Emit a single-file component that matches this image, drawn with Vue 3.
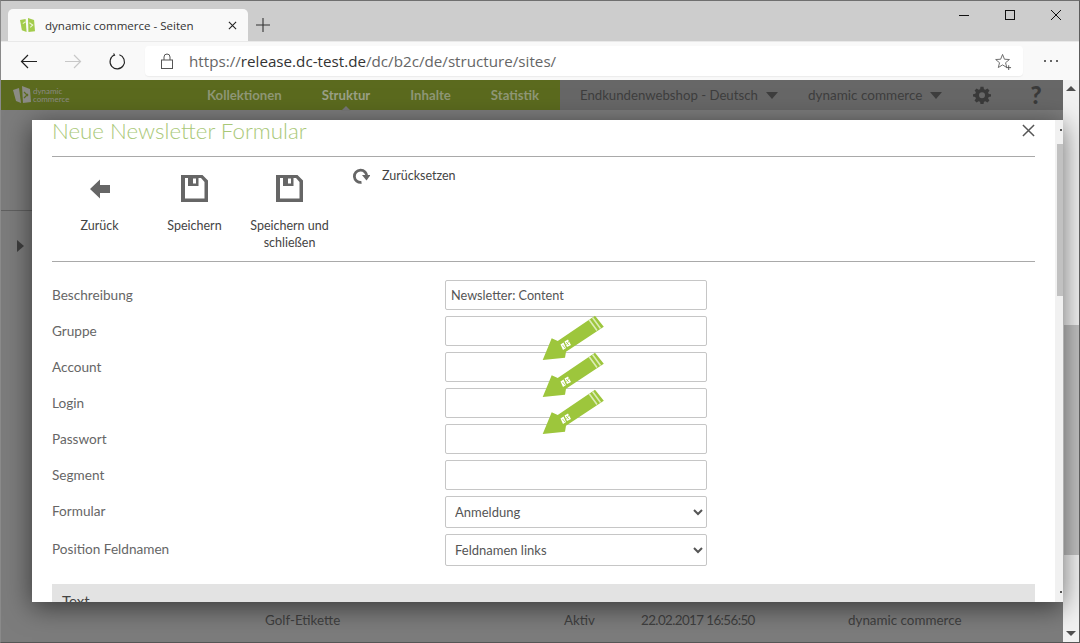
<script setup>
const labels = ['Beschreibung', 'Gruppe', 'Account', 'Login', 'Passwort', 'Segment']
const arrows = [0, 37, 74]
</script>

<template>
  <div class="window">
    <div class="titlebar">
      <div class="tab">
        <svg class="favicon" viewBox="0 0 16 16">
          <path d="M0 2 L6 1 L7 15 L2 13 Z" fill="#a3cc4c" />
          <path d="M8.5 0 L15 2 L16 14 L9 15 Z" fill="#a3cc4c" />
          <path d="M3 6 L6 4 M10 5 L14 8 M11 10 L14 7" stroke="#e8f3cf" stroke-width="1.2" fill="none" />
        </svg>
        <span class="tab-title">dynamic commerce - Seiten</span>
        <svg class="tab-close" viewBox="0 0 10 10"><path d="M1 1 L9 9 M9 1 L1 9" stroke="#222" stroke-width="1.2" /></svg>
      </div>
      <svg class="new-tab" viewBox="0 0 14 14"><path d="M7 0 V14 M0 7 H14" stroke="#333" stroke-width="1.1" /></svg>
      <div class="win-buttons">
        <svg viewBox="0 0 12 12"><path d="M1 6.5 H11" stroke="#111" stroke-width="1" /></svg>
        <svg viewBox="0 0 12 12"><rect x="1.5" y="1.5" width="9" height="9" fill="none" stroke="#111" stroke-width="1" /></svg>
        <svg viewBox="0 0 12 12"><path d="M1 1 L11 11 M11 1 L1 11" stroke="#111" stroke-width="1" /></svg>
      </div>
    </div>

    <div class="toolbar">
      <div class="nav-icons">
        <svg viewBox="0 0 18 16"><path d="M17 8 H1.5 M8 1.5 L1.5 8 L8 14.5" fill="none" stroke="#222" stroke-width="1.2" /></svg>
        <svg viewBox="0 0 18 16"><path d="M1 8 H16.5 M10 1.5 L16.5 8 L10 14.5" fill="none" stroke="#c8c8c8" stroke-width="1.2" /></svg>
        <svg viewBox="0 0 18 18"><path d="M6.2 2.2 A7.6 7.6 0 1 0 11.5 1.9 M5.4 0.6 L6.4 2.4 L3.6 3.4" fill="none" stroke="#222" stroke-width="1.2" /></svg>
      </div>
      <div class="address">
        <svg class="lock" viewBox="0 0 12 16"><path d="M3 7 V4 A3 3 0 0 1 9 4 V7" fill="none" stroke="#555" stroke-width="1" /><rect x="0.5" y="7" width="11" height="8.5" fill="none" stroke="#555" stroke-width="1" /></svg>
        <span class="url"><span class="url-dim">https://</span>release.dc-test.de<span class="url-dim">/dc/b2c/de/structure/sites/</span></span>
        <svg class="star" viewBox="0 0 18 18"><path d="M8 1.5 L10 6.6 L15.3 6.9 L11.2 10.3 L12.5 15.4 L8 12.6 L3.5 15.4 L4.8 10.3 L0.7 6.9 L6 6.6 Z" fill="none" stroke="#666" stroke-width="1" /><path d="M14.5 13 V18 M12 15.5 H17" stroke="#555" stroke-width="1" /></svg>
      </div>
      <div class="more"><i></i><i></i><i></i></div>
    </div>

    <div class="viewport">
      <div class="page">
        <div class="app-header">
          <div class="logo">
            <svg viewBox="0 0 18 18"><path d="M0 4 L6 2 L8 17 L3 15 Z" fill="#8b8b85" /><path d="M9 0 L17 3 L18 16 L10 17 Z" fill="#8b8b85" /><path d="M11 6 L15 10 M11 12 L15 8" stroke="#5c6a20" stroke-width="1.2" /></svg>
            <span>dynamic<br />commerce</span>
          </div>
          <nav class="main-nav">
            <a>Kollektionen</a>
            <a class="active">Struktur</a>
            <a>Inhalte</a>
            <a>Statistik</a>
          </nav>
          <div class="header-right">
            <span class="drop shop">Endkundenwebshop - Deutsch<b></b></span>
            <span class="drop">dynamic commerce<b></b></span>
            <svg class="gear" viewBox="0 0 24 24"><path fill="#3a3a3a" fill-rule="evenodd" d="M10 1 H14 L14.6 4.2 L16.6 5 L19.3 3.2 L22 6 L20.1 8.6 L21 10.6 L24 11 V14 L20.9 14.6 L20.1 16.6 L21.9 19.3 L19.2 22 L16.6 20.2 L14.6 21 L14 24 H10 L9.4 21 L7.4 20.2 L4.8 22 L2 19.3 L3.9 16.6 L3.1 14.6 L0 14 V11 L3.1 10.4 L3.9 8.4 L2.1 5.9 L4.8 3.2 L7.4 5 L9.4 4.2 Z M12 8.4 A4 4 0 1 0 12 16.4 A4 4 0 1 0 12 8.4 Z" /></svg>
            <span class="help">?</span>
          </div>
        </div>
        <div class="sub-section"></div>
        <div class="tree-toggle"></div>
        <div class="bg-row">
          <span>Golf-Etikette</span>
          <span>Aktiv</span>
          <span class="bg-date">22.02.2017 16:56:50</span>
          <span>dynamic commerce</span>
        </div>

        <div class="modal">
          <div class="modal-content">
            <div class="modal-title">Neue Newsletter Formular</div>
            <svg class="modal-close" viewBox="0 0 14 14"><path d="M1 1 L13 13 M13 1 L1 13" stroke="#555" stroke-width="1.6" /></svg>
            <div class="actions">
              <div class="action">
                <svg class="a-icon back" viewBox="0 0 20 20"><path d="M0 10 L10 0.5 V6 H20 V14 H10 V19.5 Z" fill="#666" /></svg>
                <span>Zurück</span>
              </div>
              <div class="action">
                <svg class="a-icon" viewBox="0 0 27 27"><path fill="#666" fill-rule="evenodd" d="M0 0 H21.5 L27 5.5 V27 H0 Z M4 3 V23.5 H23.5 V7 L20 3 H17.5 V11 H7 V3 Z M12 3.5 V8.5 H15 V3.5 Z" /></svg>
                <span>Speichern</span>
              </div>
              <div class="action">
                <svg class="a-icon" viewBox="0 0 27 27"><path fill="#666" fill-rule="evenodd" d="M0 0 H21.5 L27 5.5 V27 H0 Z M4 3 V23.5 H23.5 V7 L20 3 H17.5 V11 H7 V3 Z M12 3.5 V8.5 H15 V3.5 Z" /></svg>
                <span>Speichern und schließen</span>
              </div>
              <div class="reset">
                <svg viewBox="0 0 18 16"><path d="M14.8 8.5 A6.2 6.2 0 1 0 9.5 14.4" fill="none" stroke="#666" stroke-width="2.8" /><path d="M10 7 H18.5 L14.5 12.5 Z" fill="#666" /></svg>
                <span>Zurücksetzen</span>
              </div>
            </div>

            <form class="form">
              <div v-for="(label, i) in labels" :key="label" class="row">
                <label>{{ label }}</label>
                <input type="text" :value="i === 0 ? 'Newsletter: Content' : ''" />
              </div>
              <div class="row row-select">
                <label>Formular</label>
                <select><option>Anmeldung</option></select>
              </div>
              <div class="row row-select">
                <label>Position Feldnamen</label>
                <select><option>Feldnamen links</option></select>
              </div>
            </form>
            <div class="section-bar">Text</div>

            <svg
              v-for="dy in arrows"
              :key="dy"
              class="marker"
              :style="{ top: 195 + dy + 'px' }"
              viewBox="0 0 64 48"
            >
              <path d="M0.7 45 L9.7 23.3 L15.7 26 L53 0.7 L61.8 11.7 L24 36.7 L23 42.7 Z" fill="#9dc63c" />
              <path d="M47 4.5 L55 15.5 M50.5 2.5 L58.5 13.5" stroke="#dcecb8" stroke-width="1.6" fill="none" />
              <path d="M18.5 29.5 L21.5 27.5 L24 33 L21 35 Z M22.5 26.5 L26 24.5 L29 30 L25 32 Z" fill="#fff" />
              <path d="M20.5 30 L23 33 M24 27 L27 30 M27 26 L24.5 30" stroke="#9dc63c" stroke-width="0.7" fill="none" />
            </svg>
          </div>
          <div class="modal-scroll">
            <i class="mark top"></i>
            <div class="modal-thumb"></div>
            <i class="mark bottom"></i>
          </div>
        </div>
      </div>

      <div class="page-scroll">
        <i class="arrow-up"></i>
        <div class="page-thumb"></div>
        <i class="arrow-down"></i>
      </div>
    </div>
  </div>
</template>

<style>
html, body { margin: 0; padding: 0; overflow: hidden; }
</style>

<style scoped>
.window {
  width: 1080px;
  height: 643px;
  box-sizing: border-box;
  border-top: 1px solid #6f6f6f;
  border-left: 1px solid #8a8a8a;
  border-right: 1px solid #5c5c5c;
  border-bottom: 1px solid #555;
  display: flex;
  flex-direction: column;
  overflow: hidden;
  font-family: "Lato", "Noto Sans", sans-serif;
}
.titlebar {
  height: 40px;
  flex: none;
  background: #cdcdcd;
  display: flex;
  align-items: flex-end;
  padding-left: 7px;
}
.tab {
  width: 240px;
  height: 32px;
  background: #f9f9f9;
  border-radius: 5px 5px 0 0;
  display: flex;
  align-items: center;
  padding: 0 11px 0 12px;
  box-sizing: border-box;
}
.favicon { width: 15px; height: 15px; flex: none; }
.tab-title {
  margin-left: 10px;
  font: 11.55px "Open Sans", sans-serif;
  color: #333;
  flex: 1;
  white-space: nowrap;
}
.tab-close { width: 9px; height: 9px; flex: none; }
.new-tab { width: 14px; height: 14px; margin: 0 0 9px 8px; }
.win-buttons {
  margin-left: auto;
  height: 100%;
  box-sizing: border-box;
  display: flex;
  align-items: flex-start;
  padding: 8px 17px 0 0;
  gap: 34px;
}
.win-buttons svg { width: 12px; height: 12px; }
.toolbar {
  height: 39px;
  flex: none;
  background: #f9f9f9;
  border-top: 1px solid #e9e9e9;
  box-sizing: border-box;
  display: flex;
  align-items: center;
}
.nav-icons {
  width: 144px;
  padding-left: 19px;
  box-sizing: border-box;
  display: flex;
  align-items: center;
  gap: 26px;
}
.nav-icons svg { width: 18px; height: 17px; flex: none; }
.address {
  width: 878px;
  height: 30px;
  background: #fff;
  border-radius: 4px;
  box-shadow: 0 1px 1px #ececec;
  display: flex;
  align-items: center;
  padding-left: 16px;
  box-sizing: border-box;
}
.lock { width: 12px; height: 16px; flex: none; }
.url {
  margin-left: 16px;
  font: 15.2px "Open Sans", sans-serif;
  color: #333;
  white-space: nowrap;
  flex: 1;
}
.url-dim { color: #666; }
.star { width: 17px; height: 17px; margin-right: 11px; flex: none; }
.more {
  display: flex;
  gap: 4px;
  margin-left: 21px;
}
.more i { width: 2px; height: 2px; background: #333; border-radius: 50%; }

.viewport {
  flex: 1;
  min-height: 0;
  display: flex;
}
.page {
  width: 1062px;
  flex: none;
  position: relative;
  background: #7c7c7c;
  display: flex;
  flex-direction: column;
}
.app-header {
  height: 30px;
  flex: none;
  background: #5b6a1e;
  display: flex;
  align-items: center;
  position: relative;
}
.logo {
  width: 206px;
  flex: none;
  display: flex;
  align-items: center;
  padding-left: 12px;
  box-sizing: border-box;
  gap: 2px;
  font-size: 8px;
  line-height: 8px;
  color: #8b8b85;
}
.logo svg { width: 18px; height: 18px; }
.main-nav {
  display: flex;
  gap: 40px;
  font-size: 13.2px;
  font-weight: 700;
  color: #8f9776;
  white-space: nowrap;
}
.main-nav a { display: block; }
.main-nav .active { color: #9aa086; position: relative; }
.main-nav .active::after {
  content: "";
  position: absolute;
  left: 50%;
  bottom: -8px;
  margin-left: -5px;
  border: 5px solid transparent;
  border-top: 0;
  border-bottom-color: #777;
}
.header-right {
  margin-left: auto;
  width: 503px;
  height: 100%;
  background: #676767;
  display: flex;
  align-items: center;
  font-size: 13.5px;
  color: #3e3e3e;
  padding-left: 20px;
  box-sizing: border-box;
  white-space: nowrap;
}
.drop { display: flex; align-items: center; }
.drop b {
  width: 0;
  height: 0;
  margin-left: 8px;
  border: 6px solid transparent;
  border-top: 7px solid #3e3e3e;
  border-bottom: 0;
}
.shop { width: 228px; font-size: 13.2px; }
.gear { width: 18px; height: 18px; margin-left: 31px; flex: none; }
.help { margin-left: 39px; font-size: 24px; font-weight: 900; line-height: 1; color: #3a3a3a; }
.sub-section {
  height: 100px;
  flex: none;
  border-bottom: 1px solid #606060;
}
.tree-toggle {
  width: 0;
  height: 0;
  margin: 29px 0 0 16px;
  border: 6px solid transparent;
  border-left: 7px solid #3e3e3e;
  border-right: 0;
}
.bg-row {
  margin-top: auto;
  margin-bottom: 14px;
  padding-left: 264px;
  display: grid;
  grid-template-columns: 299px 77px 207px auto;
  font-size: 13.4px;
  color: #3f3f3f;
  white-space: nowrap;
}
.bg-date { letter-spacing: -0.6px; }
.modal {
  position: absolute;
  left: 31px;
  top: 40px;
  right: 0;
  height: 482px;
  background: #fff;
  box-shadow: 0 5px 25px rgba(0, 0, 0, 0.55);
  display: flex;
  overflow: hidden;
}
.modal-content {
  flex: 1;
  min-width: 0;
  padding: 0 20px;
  position: relative;
  overflow: hidden;
  color: #666;
}
.modal-title {
  height: 36px;
  border-bottom: 1px solid #a9a9a9;
  font-size: 22.3px;
  font-weight: 300;
  line-height: 22px;
  color: #a9c878;
  white-space: nowrap;
}
.modal-close {
  position: absolute;
  top: 4px;
  right: 20px;
  width: 13px;
  height: 13px;
}
.actions {
  height: 104px;
  border-bottom: 1px solid #a9a9a9;
  display: flex;
  align-items: flex-start;
  font-size: 12.5px;
  line-height: 17px;
  color: #444;
}
.action {
  width: 95px;
  padding-top: 18px;
  display: flex;
  flex-direction: column;
  align-items: center;
  text-align: center;
}
.action span { margin-top: 15px; }
.a-icon { width: 27px; height: 27px; }
.a-icon.back { width: 20px; height: 20px; margin: 4px 0 3px; }
.reset {
  display: flex;
  align-items: center;
  gap: 12px;
  margin-left: 15px;
  margin-top: 10px;
}
.reset svg { width: 18px; height: 16px; }
.form {
  margin-top: 18px;
  font-size: 13.6px;
}
.row {
  height: 30px;
  margin-bottom: 6px;
  display: flex;
  align-items: center;
}
.row label { width: 393px; flex: none; color: #666; }
.row input, .row select {
  width: 262px;
  height: 100%;
  box-sizing: border-box;
  border: 1px solid #c6c6c6;
  border-radius: 2px;
  background: #fff;
  color: #555;
  font: 13px "Lato", sans-serif;
  padding: 0 5px;
  outline: none;
}
.row input { font-size: 12.7px; }
.row-select { height: 32px; }
.row-select label { padding-bottom: 2px; }
.section-bar {
  margin-top: 18px;
  height: 40px;
  padding: 8px 10px;
  box-sizing: border-box;
  background: #e3e3e3;
  color: #444;
  font-size: 15px;
}
.marker {
  position: absolute;
  left: 510px;
  width: 64px;
  height: 48px;
}
.modal-scroll {
  width: 8px;
  flex: none;
  background: #f1f1f1;
  position: relative;
  display: flex;
  flex-direction: column;
  align-items: flex-end;
}
.modal-thumb {
  width: 6px;
  height: 152px;
  margin-top: 24px;
  background: #c1c1c1;
}
.mark {
  position: absolute;
  right: 1px;
  width: 2px;
  height: 2px;
  background: #555;
}
.mark.top { top: 9px; }
.mark.bottom { bottom: 9px; }
.page-scroll {
  flex: 1;
  background: #f1f1f1;
  display: flex;
  flex-direction: column;
  align-items: center;
}
.arrow-up {
  margin-top: 6px;
  width: 0;
  height: 0;
  flex: none;
  border: 5px solid transparent;
  border-top: 0;
  border-bottom: 5px solid #505050;
}
.page-thumb {
  width: 15px;
  height: 230px;
  flex: none;
  margin-top: 234px;
  background: #c1c1c1;
}
.arrow-down {
  margin-top: auto;
  margin-bottom: 6px;
  width: 0;
  height: 0;
  flex: none;
  border: 5px solid transparent;
  border-bottom: 0;
  border-top: 5px solid #505050;
}
</style>
